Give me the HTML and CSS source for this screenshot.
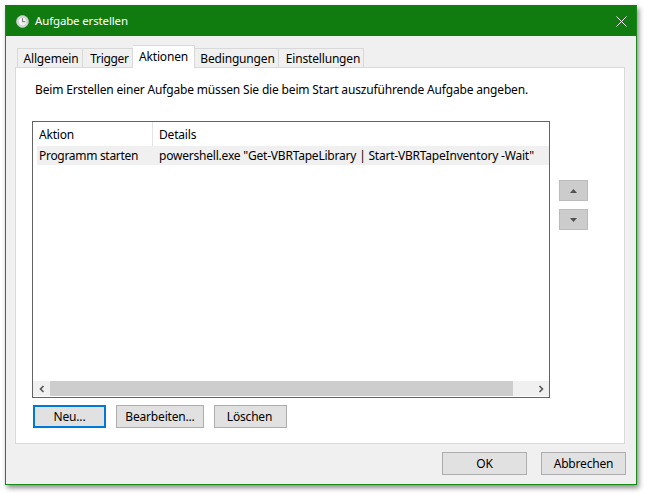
FILE: index.html
```html
<!DOCTYPE html>
<html lang="de">
<head>
<meta charset="utf-8">
<title>Aufgabe erstellen</title>
<link rel="stylesheet" href="styles.css">
</head>
<body>
<div class="window">
  <header class="titlebar">
    <svg class="clock" width="13" height="13" viewBox="0 0 14 14"><circle cx="7" cy="7" r="6.4" fill="#dcdcdc" stroke="#b5bdb5"/><circle cx="7" cy="7" r="4.6" fill="#f4f4f4" stroke="#bdbdbd" stroke-width=".6"/><path d="M7 3.4V7.3H10" fill="none" stroke="#666" stroke-width="1"/></svg>
    <span class="title">Aufgabe erstellen</span>
    <svg class="close" width="11" height="11" viewBox="0 0 11 11"><path d="M.5.5l10 10M10.5.5l-10 10" stroke="#fff" stroke-width="1" fill="none"/></svg>
  </header>
  <div class="body">
    <nav class="tabs">
      <span class="tab t1">Allgemein</span>
      <span class="tab t2">Trigger</span>
      <span class="tab active t3">Aktionen</span>
      <span class="tab t4">Bedingungen</span>
      <span class="tab t5">Einstellungen</span>
    </nav>
    <section class="panel">
      <p class="intro">Beim Erstellen einer Aufgabe müssen Sie die beim Start auszuführende Aufgabe angeben.</p>
      <div class="list-row">
        <div class="list">
          <div class="list-head">
            <span class="col-a">Aktion</span>
            <span class="col-b">Details</span>
          </div>
          <div class="list-item">
            <span class="col-a">Programm starten</span>
            <span class="col-b">powershell.exe "Get-VBRTapeLibrary | Start-VBRTapeInventory -Wait"</span>
          </div>
          <div class="list-fill"></div>
          <div class="scrollbar">
            <span class="sb-btn"><svg width="8" height="8" viewBox="0 0 8 8"><path d="M5.5 1L2.5 4l3 3" fill="none" stroke="#555" stroke-width="1.6"/></svg></span>
            <span class="sb-track"></span>
            <span class="sb-btn sb-right"><svg width="8" height="8" viewBox="0 0 8 8"><path d="M2.5 1L5.5 4l-3 3" fill="none" stroke="#555" stroke-width="1.6"/></svg></span>
          </div>
        </div>
        <div class="movers">
          <button class="mover"><svg width="7" height="4" viewBox="0 0 7 4"><path d="M3.5 0L7 4H0z" fill="#505050"/></svg></button>
          <button class="mover"><svg width="7" height="4" viewBox="0 0 7 4"><path d="M0 0h7L3.5 4z" fill="#505050"/></svg></button>
        </div>
      </div>
      <div class="actions">
        <button class="btn focus b-neu">Neu...</button>
        <button class="btn b-edit">Bearbeiten...</button>
        <button class="btn b-del">Löschen</button>
      </div>
    </section>
    <footer class="footer">
      <button class="btn wide">OK</button>
      <button class="btn wide">Abbrechen</button>
    </footer>
  </div>
</div>
</body>
</html>
```
FILE: styles.css
```css
* { box-sizing: border-box; }
html, body { margin: 0; height: 100%; background: #fff; }
body { padding: 5px 0 0 5px; font: 12px/16px "Noto Sans", "Liberation Sans", sans-serif; color: #000; letter-spacing: -0.18px; }
.window { width: 632px; height: 480px; border: 1px solid #178a17; border-top-color: #107c10; background: #f0f0f0; display: flex; flex-direction: column; box-shadow: 2px 3px 5px rgba(0,0,0,.45); }
.titlebar { height: 30px; flex: none; background: #107c10; color: #fff; display: flex; align-items: center; padding: 0 9px 0 10px; }
.clock { flex: none; }
.title { margin-left: 6px; flex: 1; font-size: 11.5px; letter-spacing: -0.15px; }
.close { flex: none; }
.body { flex: 1; display: flex; flex-direction: column; padding: 9px 12px 9px 9px; }
.tabs { display: flex; height: 23px; padding-left: 2px; align-items: flex-end; position: relative; z-index: 1; margin-bottom: -1px; }
.tab { height: 20px; border: 1px solid #d9d9d9; border-left: 0; background: #f0f0f0; text-align: center; line-height: 20px; white-space: nowrap; }
.t1 { width: 66px; border-left: 1px solid #d9d9d9; padding-left: 2px; }
.t2 { width: 50px; padding-left: 4px; letter-spacing: -0.3px; }
.t3 { width: 62px; }
.t4 { width: 84px; padding-left: 2px; }
.t5 { width: 85px; padding-left: 4px; }
.tab.active { height: 23px; background: #fff; border-bottom: 0; line-height: 22px; }
.panel { width: 610px; height: 377px; flex: none; background: #fff; border: 1px solid #d9d9d9; display: flex; flex-direction: column; padding: 14px 0 0 16px; }
.intro { margin: 0 0 23px 3px; height: 16px; white-space: nowrap; letter-spacing: -0.17px; }
.list-row { display: flex; }
.list { width: 518px; height: 277px; border: 1px solid #646464; background: #fff; display: flex; flex-direction: column; }
.list-head { display: flex; height: 24px; flex: none; align-items: center; }
.list-item { display: flex; height: 19px; flex: none; align-items: center; background: #f0f0f0; margin-left: 4px; white-space: nowrap; letter-spacing: -0.21px; }
.col-a { width: 119px; flex: none; padding-left: 6px; }
.list-item .col-a { width: 116px; padding-left: 2px; letter-spacing: -0.3px; }
.col-b { padding-left: 6px; }
.list-head .col-a { padding-top: 1px; }
.list-head .col-b { border-left: 1px solid #e5e5e5; height: 24px; line-height: 25px; }
.list-fill { flex: 1; }
.scrollbar { height: 15px; flex: none; display: flex; margin-bottom: 1px; }
.sb-btn { width: 17px; background: #f0f0f0; display: flex; align-items: center; justify-content: center; }
.sb-right { width: 36px; justify-content: flex-end; padding-right: 4px; }
.sb-track { flex: 1; background: #cdcdcd; }
.movers { display: flex; flex-direction: column; gap: 8px; margin: 59px 0 0 9px; }
.mover { width: 29px; height: 21px; background: #ccc; border: 1px solid #bbb; padding: 0; display: flex; align-items: center; justify-content: center; }
.actions { display: flex; gap: 10px; margin: 7px 0 0 1px; }
.actions .btn { padding-top: 1px; }
.btn { height: 23px; padding: 0; background: #e1e1e1; border: 1px solid #adadad; font: inherit; letter-spacing: inherit; color: #000; }
.focus { border: 2px solid #0078d7; }
.b-neu { width: 73px; }
.b-edit { width: 88px; }
.b-del { width: 73px; padding-right: 2px; }
.footer { display: flex; justify-content: flex-end; gap: 14px; margin-top: 8px; margin-right: -2px; }
.wide { width: 85px; }
```
